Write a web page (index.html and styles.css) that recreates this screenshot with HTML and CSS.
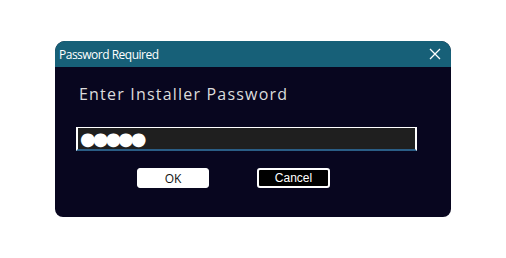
FILE: index.html
```html
<!DOCTYPE html>
<html>
<head>
<meta charset="utf-8">
<link rel="stylesheet" href="styles.css">
</head>
<body>
<div class="dialog">
  <div class="titlebar">
    <span class="title">Password Required</span>
    <svg class="close" width="12" height="12" viewBox="0 0 12 12"><path d="M1 1 L11 11 M11 1 L1 11" stroke="#fff" stroke-width="1.3" fill="none"/></svg>
  </div>
  <div class="content">
    <div class="label">Enter Installer Password</div>
    <div class="input"><span class="dots">●●●●●</span></div>
    <div class="buttons">
      <button class="btn ok">OK</button>
      <button class="btn cancel">Cancel</button>
    </div>
  </div>
</div>
</body>
</html>
```
FILE: styles.css
```css
html, body { margin: 0; padding: 0; background: #fff; }
body { padding: 41px 0 0 55px; }
.dialog {
  width: 396px;
  height: 176px;
  background: #08061f;
  border-radius: 10px 10px 8px 8px;
  overflow: hidden;
  display: flex;
  flex-direction: column;
}
.titlebar {
  height: 26px;
  background: #176078;
  display: flex;
  align-items: center;
  justify-content: space-between;
  padding: 0 10px 0 4px;
}
.title {
  font-family: "Open Sans", "DejaVu Sans", sans-serif;
  font-size: 12px;
  color: #fff;
  letter-spacing: -0.5px;
  margin-top: 1px;
}
.close { display: block; }
.content {
  display: flex;
  flex-direction: column;
  padding: 17px 0 0 21px;
}
.label {
  font-family: "Open Sans", "DejaVu Sans", sans-serif;
  font-size: 16px;
  color: #dcdcdc;
  line-height: 20px;
  letter-spacing: 1.2px;
  margin-left: 3px;
}
.input {
  margin-top: 23px;
  width: 335px;
  height: 21px;
  background: #1f1f1f;
  border: 2px solid #fff;
  border-top-width: 1px;
  border-bottom: 2px solid #2a5d85;
  display: flex;
  align-items: center;
  padding-left: 2px;
}
.dots {
  font-family: "DejaVu Sans", sans-serif;
  font-size: 18px;
  color: #fff;
  letter-spacing: -3px;
  line-height: 21px;
}
.buttons {
  display: flex;
  margin-top: 17px;
  margin-left: 61px;
  gap: 48px;
}
.btn {
  width: 73px;
  height: 20px;
  border-radius: 3px;
  font-family: "Open Sans", Arial, sans-serif;
  font-size: 12px;
  padding: 0;
}
.ok {
  background: #fff;
  color: #111;
  border: 1px solid #fff;
  width: 72px;
}
.cancel {
  background: #000;
  color: #fff;
  border: 2px solid #fff;
  font-family: "Liberation Sans", Arial, sans-serif;
}
```
